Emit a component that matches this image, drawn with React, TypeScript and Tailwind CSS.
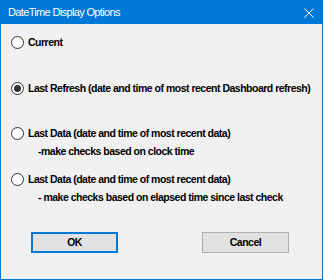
import React from "react";

function Radio({ checked }: { checked?: boolean }) {
  return (
    <span className="flex h-[13px] w-[13px] shrink-0 items-center justify-center rounded-full border border-[#333333] bg-white">
      {checked && <span className="h-[7px] w-[7px] rounded-full bg-[#333333]" />}
    </span>
  );
}

function Option({ label, checked, mt }: { label: string; checked?: boolean; mt: string }) {
  return (
    <div className={`flex h-[13px] items-center gap-[4px] pl-[10px] ${mt}`}>
      <Radio checked={checked} />
      <span className="whitespace-nowrap leading-[13px]">{label}</span>
    </div>
  );
}

export default function App() {
  return (
    <div
      className="flex h-[280px] w-[323px] flex-col border-x border-b border-[#0078d7] bg-[#f0f0f0] text-[10.5px] font-bold tracking-[-0.5px] text-black"
      style={{ fontFamily: '"Liberation Sans", Arial, sans-serif' }}
    >
      <div className="-mx-px flex h-[24px] shrink-0 items-center justify-between bg-[#0078d7] pl-[8px] pr-[9px]">
        <span
          className="text-[11px] font-normal tracking-[-0.65px] text-white"
          style={{ fontFamily: '"Liberation Sans", Arial, sans-serif' }}
        >
          DateTime Display Options
        </span>
        <svg width="10" height="10" viewBox="0 0 10 10" className="mt-px">
          <path d="M0.5 0.5 L9.5 9.5 M9.5 0.5 L0.5 9.5" stroke="white" strokeWidth="1" />
        </svg>
      </div>
      <Option label="Current" mt="mt-[12px]" />
      <Option label="Last Refresh (date and time of most recent Dashboard refresh)" checked mt="mt-[33px]" />
      <Option label="Last Data (date and time of most recent data)" mt="mt-[32px]" />
      <div className="mt-[5px] h-[13px] pl-[37px] leading-[13px] whitespace-nowrap">-make checks based on clock time</div>
      <Option label="Last Data (date and time of most recent data)" mt="mt-[15px]" />
      <div className="mt-[5px] h-[13px] pl-[37px] leading-[13px] whitespace-nowrap">- make checks based on elapsed time since last check</div>
      <div className="mt-[28px] flex gap-[84px] pl-[30px]">
        <button className="flex h-[21px] w-[87px] items-center justify-center border-2 border-[#0078d7] bg-[#e1e1e1] font-bold">
          OK
        </button>
        <button className="flex h-[21px] w-[87px] items-center justify-center border border-[#adadad] bg-[#e1e1e1] font-bold">
          Cancel
        </button>
      </div>
    </div>
  );
}
